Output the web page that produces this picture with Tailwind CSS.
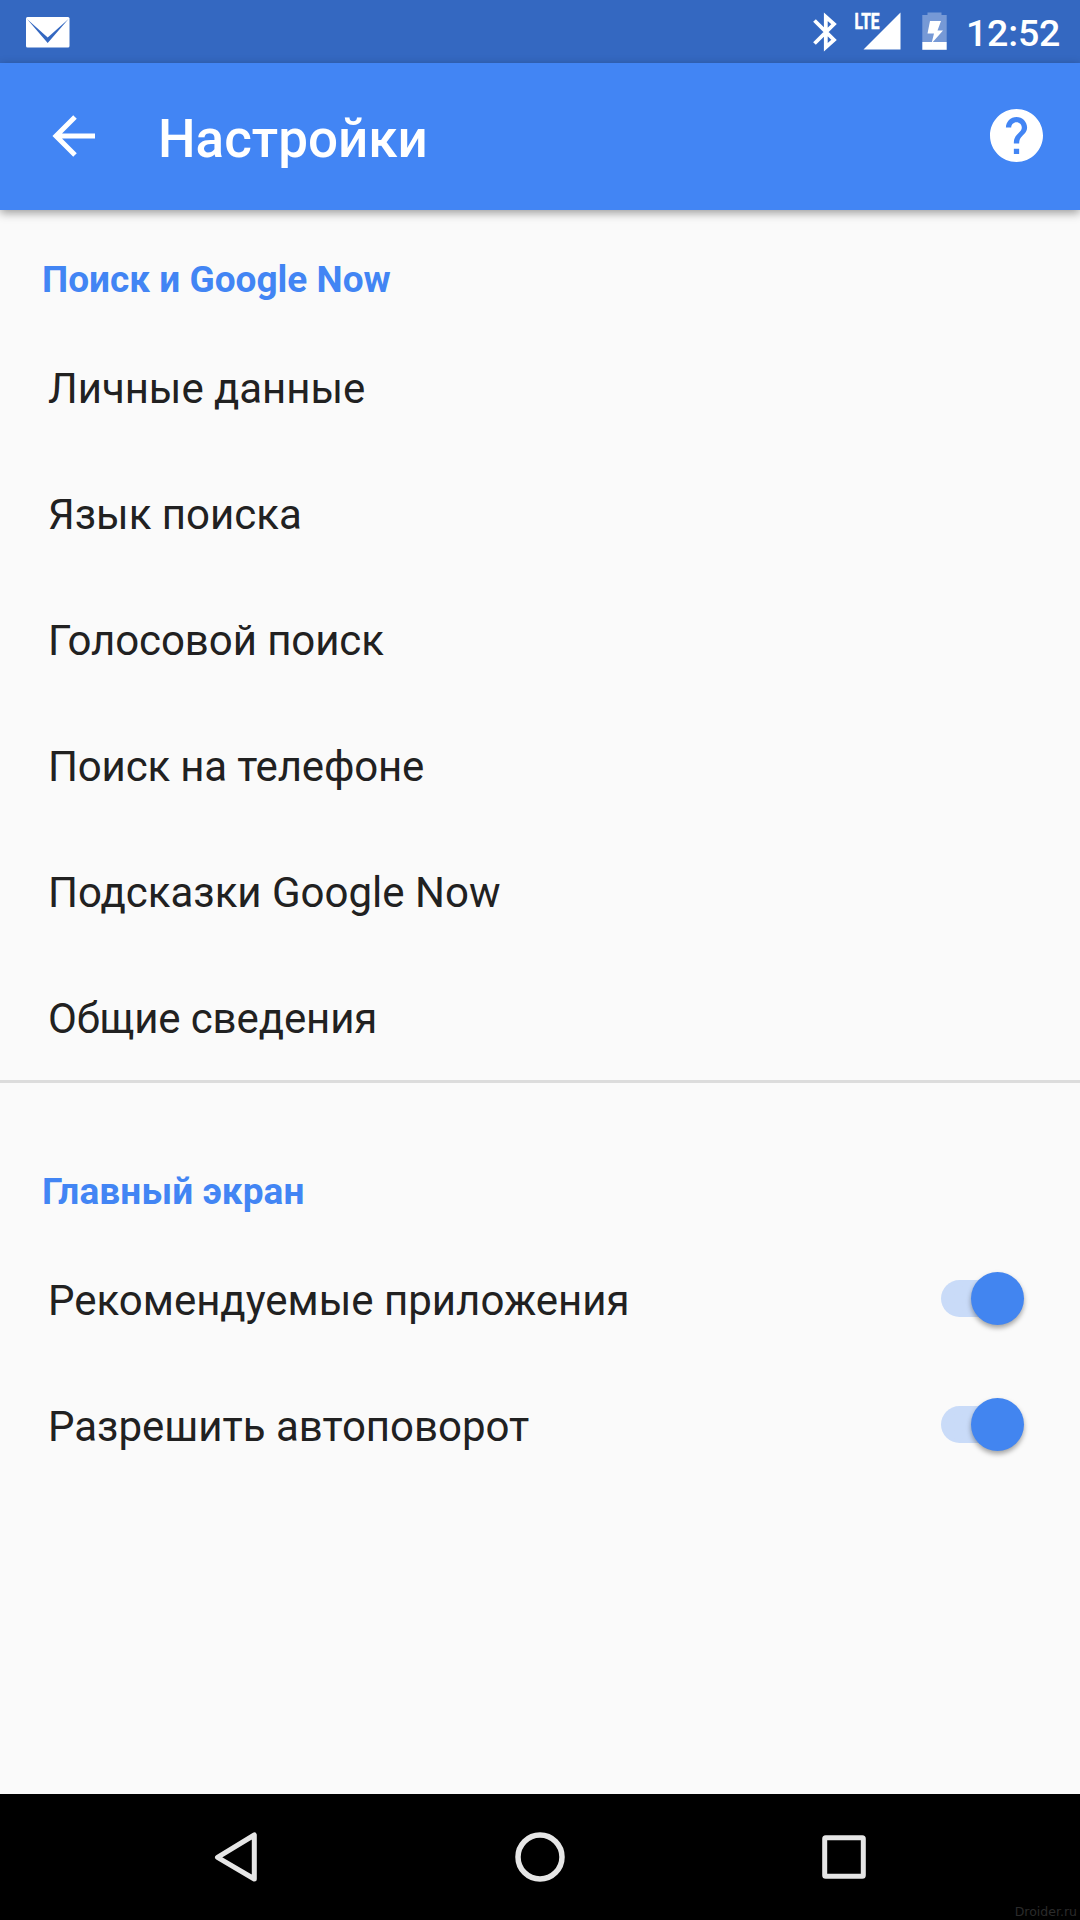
<!DOCTYPE html>
<html lang="ru">
<head>
  <meta charset="UTF-8" />
  <meta name="viewport" content="width=device-width, initial-scale=1.0" />
  <title>Настройки</title>
  <script src="https://cdn.jsdelivr.net/npm/@tailwindcss/browser@4"></script>
</head>
<body class="w-[1080px] h-[1920px] overflow-hidden flex flex-col bg-[#fafafa] text-[#212121] font-['Roboto',sans-serif]">

<!-- Status bar -->
<div class="h-[63px] shrink-0 bg-[#3468c1] text-white flex items-center justify-between">
  <svg class="ml-[26px] mt-0.5" width="44" height="31" viewBox="0 0 44 31">
    <rect width="43.500" height="30.500" rx="1.500" fill="#fff" />
    <path d="M1 2L21.700 20.500L42.500 2L21.700 26z" fill="#3468c1" />
  </svg>
  <div class="flex items-center h-full">
    <svg width="176" height="63" viewBox="790 0 176 63">
      <!-- bluetooth -->
      <path d="M814.500 20.500L834 40L825.800 47.200V16.800L834 24L814.500 43.500" fill="none" stroke="#fff" stroke-width="3.800" />
      <!-- signal -->
      <path d="M863.500 49.500L900.500 12.500V49.500z" fill="#fff" />
      <text x="854.500" y="29" font-size="22" font-weight="700" textLength="25" lengthAdjust="spacingAndGlyphs" fill="#fff" stroke="#fff" stroke-width="0.600">LTE</text>
      <!-- battery -->
      <path d="M922.300 15H927.500V12.500H941.500V15H946.700V42H922.300z" fill="#7699d6" />
      <path d="M922.300 42H946.700V49.800H922.300z" fill="#fff" />
      <path d="M930 21H941L937.500 30.500H943L931.500 43.500L934 33.500H927.500z" fill="#fff" />
    </svg>
    <span class="w-[92px] mr-[22px] text-right whitespace-nowrap text-[37.500px] tracking-[-0.2px] leading-none font-medium mt-1">12:52</span>
  </div>
</div>

<!-- App bar -->
<header class="relative h-[147px] shrink-0 bg-[#4285f4] text-white flex items-center shadow-[0_3px_9px_rgba(0,0,0,0.38)]">
  <svg class="ml-[52px] -mt-px" width="44" height="44" viewBox="0 0 44 44" fill="none" stroke="#fff" stroke-width="5">
    <path d="M43 22H4.500M23 3L4 22L23 41" />
  </svg>
  <h1 class="ml-[62px] mt-1.5 text-[53px] leading-none font-medium">Настройки</h1>
  <svg class="ml-auto mr-[37px] -mt-0.5" width="53" height="53" viewBox="2 2 20 20" fill="#fff">
    <path d="M12 2C6.480 2 2 6.480 2 12s4.480 10 10 10 10-4.480 10-10S17.520 2 12 2zm1 17h-2v-2h2v2zm2.070-7.750l-.9.920C13.450 12.900 13 13.500 13 15h-2v-.5c0-1.100.45-2.100 1.170-2.830l1.240-1.260c.37-.36.59-.86.59-1.410 0-1.100-.9-2-2-2s-2 .9-2 2H8c0-2.210 1.790-4 4-4s4 1.790 4 4c0 .88-.36 1.680-.93 2.250z" />
  </svg>
</header>

<main class="grow pt-[22px]">
  <section>
    <h2 class="h-[94px] flex items-center pt-0.5 pl-[42px] text-[37px] font-bold text-[#4285f4]">Поиск и Google Now</h2>
    <ul class="text-[42px] leading-none">
      <li class="h-[126px] flex items-center px-12 tracking-[-0.05px]">Личные данные</li>
      <li class="h-[126px] flex items-center px-12">Язык поиска</li>
      <li class="h-[126px] flex items-center px-12 tracking-[-0.08px]">Голосовой поиск</li>
      <li class="h-[126px] flex items-center px-12 tracking-[-0.17px]">Поиск на телефоне</li>
      <li class="h-[126px] flex items-center px-12">Подсказки Google Now</li>
      <li class="h-[124px] flex items-center px-12 pt-0.5 tracking-[-0.12px]">Общие сведения</li>
    </ul>
  </section>

  <hr class="border-0 h-[3px] bg-[#dcdcdc]" />

  <section class="pt-[61px]">
    <h2 class="h-[94px] flex items-center pt-0.5 pl-[42px] text-[37px] tracking-[0.1px] font-bold text-[#4285f4]">Главный экран</h2>
    <ul class="text-[42px] leading-none">
      <li class="h-[126px] flex items-center justify-between pl-12 pr-14">
        Рекомендуемые приложения
        <span class="w-[83px] h-[37px] mb-[5px] rounded-l-full bg-linear-to-r from-[#c9dbf8] from-60% to-transparent to-60% flex items-center justify-end">
          <span class="size-[53px] shrink-0 rounded-full bg-[#4285f0] shadow-[0_3px_5px_rgba(0,0,0,0.35)]"></span>
        </span>
      </li>
      <li class="h-[126px] flex items-center justify-between pl-12 pr-14">
        Разрешить автоповорот
        <span class="w-[83px] h-[37px] mb-[5px] rounded-l-full bg-linear-to-r from-[#c9dbf8] from-60% to-transparent to-60% flex items-center justify-end">
          <span class="size-[53px] shrink-0 rounded-full bg-[#4285f0] shadow-[0_3px_5px_rgba(0,0,0,0.35)]"></span>
        </span>
      </li>
    </ul>
  </section>
</main>

<!-- Navigation bar -->
<nav class="relative h-[126px] shrink-0 bg-black">
  <svg width="1080" height="126" viewBox="0 1794 1080 126" fill="none" stroke="#e6e6e6" stroke-linejoin="round">
    <path d="M217.500 1857.300L254.300 1835V1879z" stroke-width="5" />
    <circle cx="540" cy="1857" r="22" stroke-width="5.500" />
    <rect x="824.700" y="1837.700" width="38.600" height="38.600" rx="1" stroke-width="5" />
  </svg>
  <span class="absolute right-[3px] bottom-0.5 text-[12.500px] leading-none text-[#2b2b2b] font-['DejaVu_Sans',sans-serif]">Droider.ru</span>
</nav>

</body>
</html>
